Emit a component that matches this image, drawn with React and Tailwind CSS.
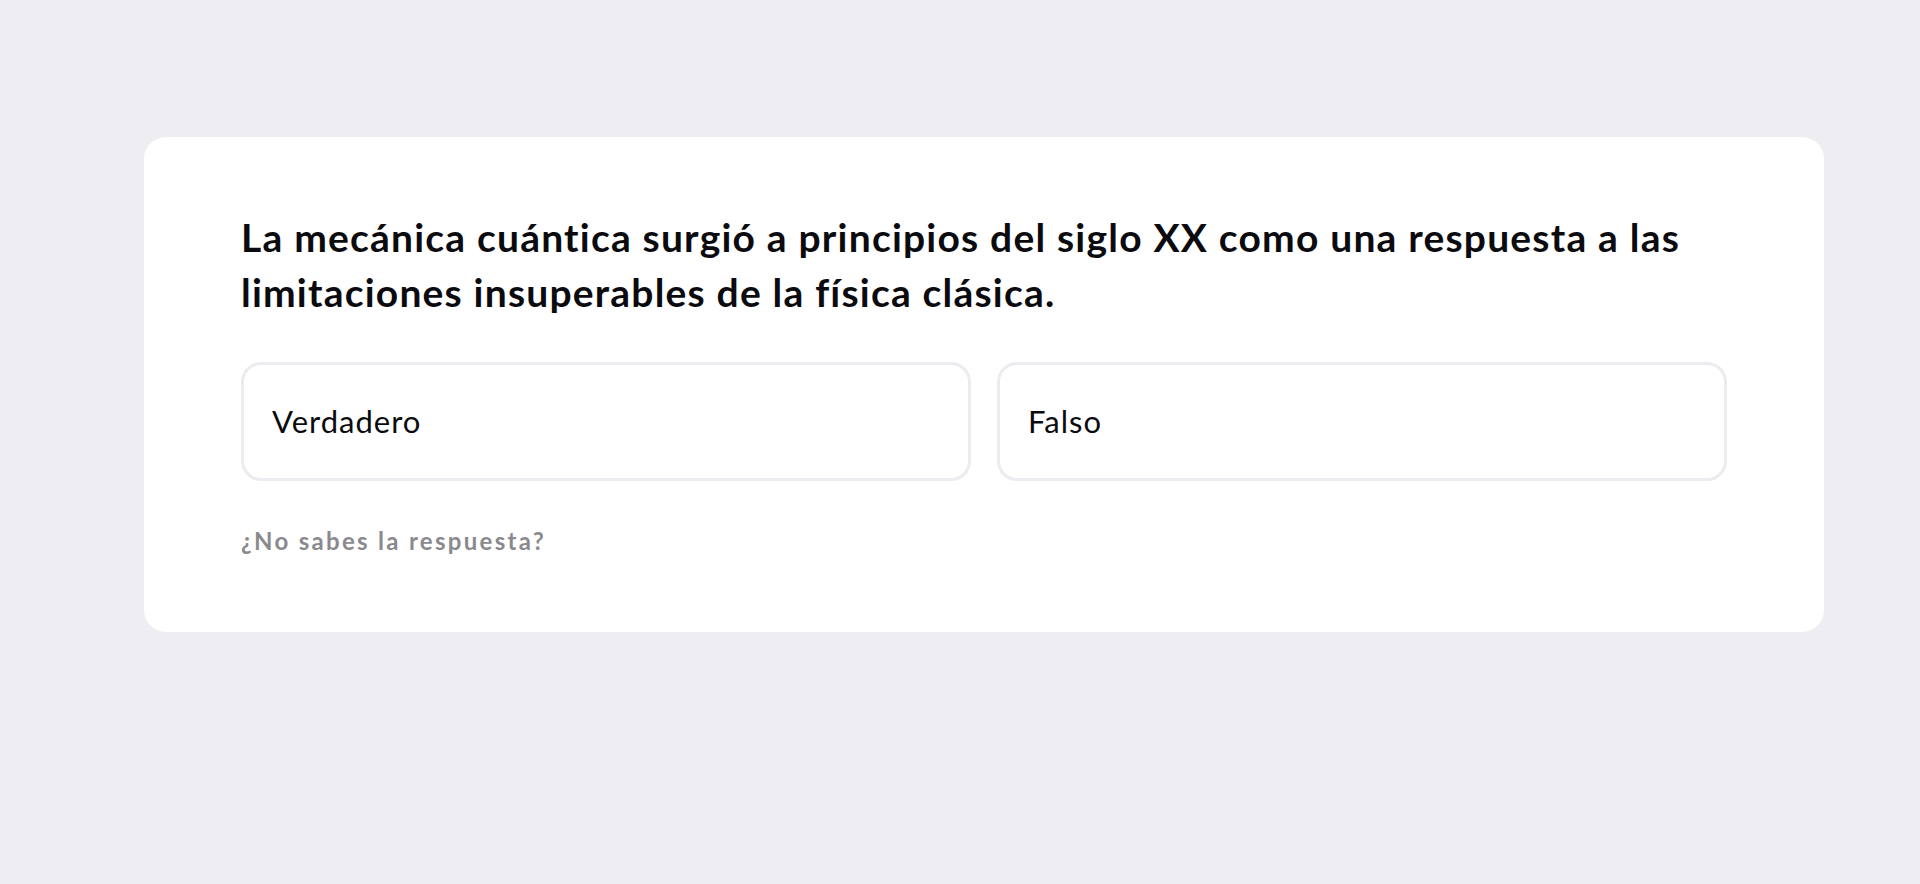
export default function App() {
    const options = ["Verdadero", "Falso"];

    return (
        <div className="min-h-screen bg-[#ededf2] pt-[137px] pl-[144px] pr-[96px]" style={{ fontFamily: "Lato, 'Open Sans', sans-serif" }}>
            <div className="bg-white rounded-[22px] px-[97px] pt-[73px] pb-[76px]">
                <h1 className="text-[39px] leading-[55px] font-bold tracking-[1.2px] text-[#0b0b0f]">
                    La mecánica cuántica surgió a principios del siglo XX como una respuesta a las limitaciones insuperables de la física clásica.
                </h1>

                <div className="grid grid-cols-2 gap-[26px] mt-[42px]">
                    {options.map((opt) => (
                        <button
                            key={opt}
                            className="h-[119px] border-[3px] border-[#ececf0] rounded-[20px] px-[28px] text-left text-[31px] tracking-[1px] text-[#0b0b0f] bg-white"
                        >
                            {opt}
                        </button>
                    ))}
                </div>

                <p className="mt-[45px] text-[24px] leading-[30px] font-bold tracking-[2.3px] text-[#8a8a8e]">
                    ¿No sabes la respuesta?
                </p>
            </div>
        </div>
    );
}
